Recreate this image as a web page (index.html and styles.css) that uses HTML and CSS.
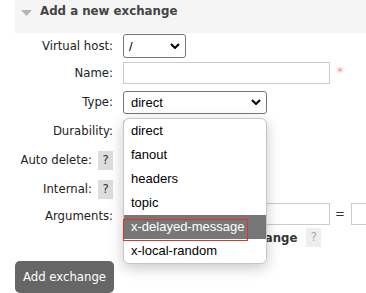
FILE: index.html
```html
<!DOCTYPE html>
<html lang="en">
<head>
    <meta charset="UTF-8">
    <meta name="viewport" content="width=device-width, initial-scale=1.0">
    <title>Add a new exchange</title>
    <link rel="stylesheet" href="styles.css">
</head>
<body>
    <div class="section">
        <h2 class="section-title">
            <svg class="toggle" width="11" height="6" viewBox="0 0 11 6"><polygon points="0,0 11,0 5.5,6" fill="#b4b4b4"/></svg>
            Add a new exchange
        </h2>

        <div class="form-grid">
            <label class="field-label">Virtual host:</label>
            <div class="field">
                <div class="select select-vhost">
                    <span>/</span>
                    <svg class="chevron" width="10" height="6" viewBox="0 0 10 6"><path d="M1 1 L5 5 L9 1" fill="none" stroke="#000" stroke-width="2"/></svg>
                </div>
            </div>

            <label class="field-label">Name:</label>
            <div class="field">
                <input type="text" class="text-input">
                <span class="mand">*</span>
            </div>

            <label class="field-label">Type:</label>
            <div class="field">
                <div class="type-wrap">
                    <div class="select select-type">
                        <span>direct</span>
                        <svg class="chevron" width="10" height="6" viewBox="0 0 10 6"><path d="M1 1 L5 5 L9 1" fill="none" stroke="#000" stroke-width="2"/></svg>
                    </div>
                    <ul class="dropdown">
                        <li>direct</li>
                        <li>fanout</li>
                        <li>headers</li>
                        <li>topic</li>
                        <li class="selected">x-delayed-message<span class="mark"></span></li>
                        <li>x-local-random</li>
                    </ul>
                </div>
            </div>

            <label class="field-label">Durability:</label>
            <div class="field">
                <div class="select select-dur"></div>
            </div>

            <label class="field-label">Auto delete: <span class="help">?</span></label>
            <div class="field">
                <div class="select select-small"></div>
            </div>

            <label class="field-label">Internal: <span class="help">?</span></label>
            <div class="field">
                <div class="select select-small"></div>
            </div>

            <label class="field-label label-args">Arguments:</label>
            <div class="field">
                <input type="text" class="text-input">
                <span class="eq">=</span>
                <input type="text" class="text-input arg-value">
            </div>

            <div></div>
            <div class="field add-args">
                <b class="arg-link">Alternate exchange</b>
                <span class="help help-muted">?</span>
            </div>
        </div>

        <button class="add-btn">Add exchange</button>
    </div>
</body>
</html>
```

FILE: styles.css
```css
body {
    margin: 0;
    background-color: #ffffff;
    color: #222222;
    font-family: "DejaVu Sans", Verdana, sans-serif;
    font-size: 11.7px;
    overflow: hidden;
}

.section {
    padding-left: 15px;
}

.section-title {
    margin: 0;
    height: 33px;
    box-sizing: border-box;
    padding: 4px 0 0 6px;
    background-color: #f5f5f5;
    display: flex;
    align-items: flex-start;
    font-size: 11.8px;
    line-height: 15px;
    font-weight: bold;
    color: #444444;
}

.toggle {
    margin: 6px 8px 0 0;
}

.form-grid {
    display: grid;
    grid-template-columns: 98px auto;
    grid-template-rows: 26px 28px 30px 28px 30px 28px 21px 27px;
    column-gap: 10px;
    align-items: center;
}

.field-label {
    display: flex;
    justify-content: flex-end;
    align-items: center;
    gap: 6px;
    white-space: nowrap;
}

.label-args {
    margin-top: 4px;
}

.field {
    display: flex;
    align-items: center;
    white-space: nowrap;
}

.help {
    display: inline-block;
    width: 15px;
    height: 19px;
    line-height: 19px;
    text-align: center;
    background-color: #dddddd;
    color: #333333;
}

.help-muted {
    background-color: #eeeeee;
    color: #aaaaaa;
    margin-left: 9px;
}

.select {
    box-sizing: border-box;
    height: 23px;
    border: 1px solid #767676;
    border-radius: 3px;
    background-color: #ffffff;
    display: flex;
    align-items: center;
    justify-content: space-between;
    padding: 0 4px 0 7px;
    font-family: "Liberation Sans", Arial, sans-serif;
    font-size: 13px;
    color: #000000;
}

.select-vhost {
    width: 63px;
    height: 24px;
    padding-left: 5px;
}

.select-type {
    width: 144px;
}

.select-dur {
    width: 82px;
}

.select-small {
    width: 50px;
}

.chevron {
    margin-right: 1px;
}

.text-input {
    box-sizing: border-box;
    width: 207px;
    height: 22px;
    margin: 0;
    border: 1px solid #cccccc;
    padding: 2px;
}

.mand {
    color: #ff8888;
    margin-left: 7px;
    font-size: 12px;
    margin-top: -3px;
}

.eq {
    margin: 0 6px 0 5px;
    color: #333333;
}

.arg-value {
    width: 60px;
}

.add-args {
    padding-left: 45px;
}

.arg-link {
    color: #333333;
}

.type-wrap {
    position: relative;
}

.dropdown {
    position: absolute;
    top: 27px;
    left: 0;
    z-index: 10;
    width: 144px;
    box-sizing: border-box;
    margin: 0;
    padding: 0;
    list-style: none;
    background-color: #ffffff;
    border: 1px solid #c6c6c6;
    border-radius: 6px;
    box-shadow: 0 4px 14px rgba(0, 0, 0, 0.22);
    font-family: "Liberation Sans", Arial, sans-serif;
    font-size: 13px;
    color: #000000;
}

.dropdown li {
    position: relative;
    height: 24px;
    line-height: 24px;
    padding-left: 7px;
}

.dropdown li.selected {
    background-color: #777777;
    color: #ffffff;
}

.mark {
    position: absolute;
    left: -1px;
    top: 4px;
    width: 125px;
    height: 22px;
    box-sizing: border-box;
    border: 1px solid #e53030;
}

.add-btn {
    margin-top: 10px;
    height: 32px;
    padding: 0 8px;
    border: none;
    border-radius: 5px;
    background-color: #666666;
    color: #ffffff;
    font-family: "DejaVu Sans", Verdana, sans-serif;
    font-size: 11.7px;
    cursor: pointer;
}
```
